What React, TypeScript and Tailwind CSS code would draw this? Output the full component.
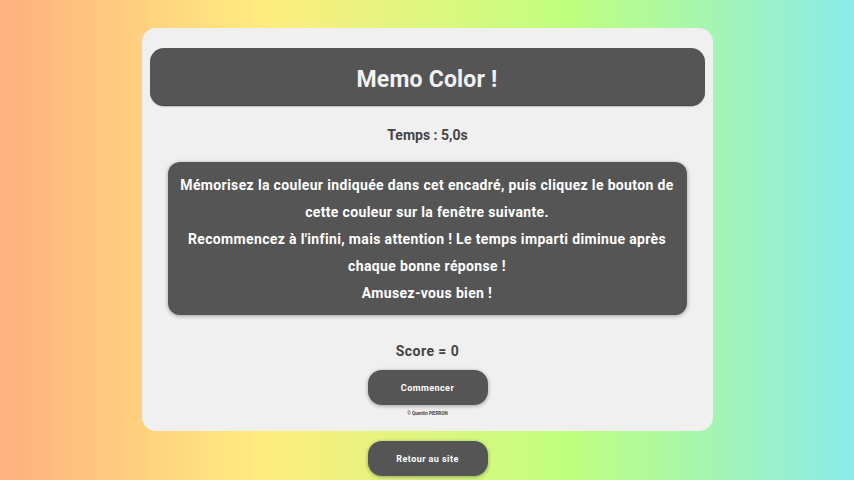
export default function App() {
  const btn = "w-[120px] h-[35px] ml-[1px] pt-[2px] rounded-[14px] bg-[#555555] text-white text-[9px] font-bold tracking-[0.45px] shadow-[0_1px_4px_rgba(0,0,0,0.35)] flex items-center justify-center";
  return (
    <div className="w-[854px] h-[480px] overflow-hidden flex flex-col items-center pt-[28px] bg-[linear-gradient(90deg,#ffb07f_0%,#ffed7f_31%,#bfff7f_67%,#8aebe8_100%)] font-['Roboto',sans-serif]">
      <div className="w-[571px] h-[403px] rounded-[14px] bg-[#f0f0f0] flex flex-col items-center pt-[20px] px-2">
        <div className="w-[555px] h-[58px] pt-[8px] shrink-0 rounded-[14px] bg-[#555555] border-b border-[#444444] shadow-[0_1px_1px_rgba(0,0,0,0.2)] flex items-center justify-center text-[#f2f2f2] text-[23px] font-bold tracking-[0.2px]">
          Memo Color !
        </div>
        <div className="mt-[20px] ml-[1px] h-[19px] leading-[19px] text-[#444444] text-[14px] font-bold tracking-[0px]">Temps : 5,0s</div>
        <div className="mt-[17px] w-[519px] h-[153px] shrink-0 rounded-[12px] bg-[#555555] shadow-[0_1px_4px_rgba(0,0,0,0.35)] text-white text-[14px] leading-[27px] font-bold tracking-[0.35px] text-center px-2 py-[10px]">
          <p>Mémorisez la couleur indiquée dans cet encadré, puis cliquez le bouton de cette couleur sur la fenêtre suivante.</p>
          <p>Recommencez à l'infini, mais attention ! Le temps imparti diminue après chaque bonne réponse !</p>
          <p>Amusez-vous bien !</p>
        </div>
        <div className="mt-[27px] ml-[1px] h-[19px] leading-[19px] text-[#444444] text-[14px] font-bold tracking-[0.45px]">Score = 0</div>
        <div className={`mt-[9px] shrink-0 ${btn}`}>Commencer</div>
        <div className="mt-[6px] ml-[1px] text-[4.5px] leading-[6px] font-bold text-[#444444]">© Quentin PIERRON</div>
      </div>
      <div className={`mt-[10px] shrink-0 ${btn}`}>Retour au site</div>
    </div>
  );
}
